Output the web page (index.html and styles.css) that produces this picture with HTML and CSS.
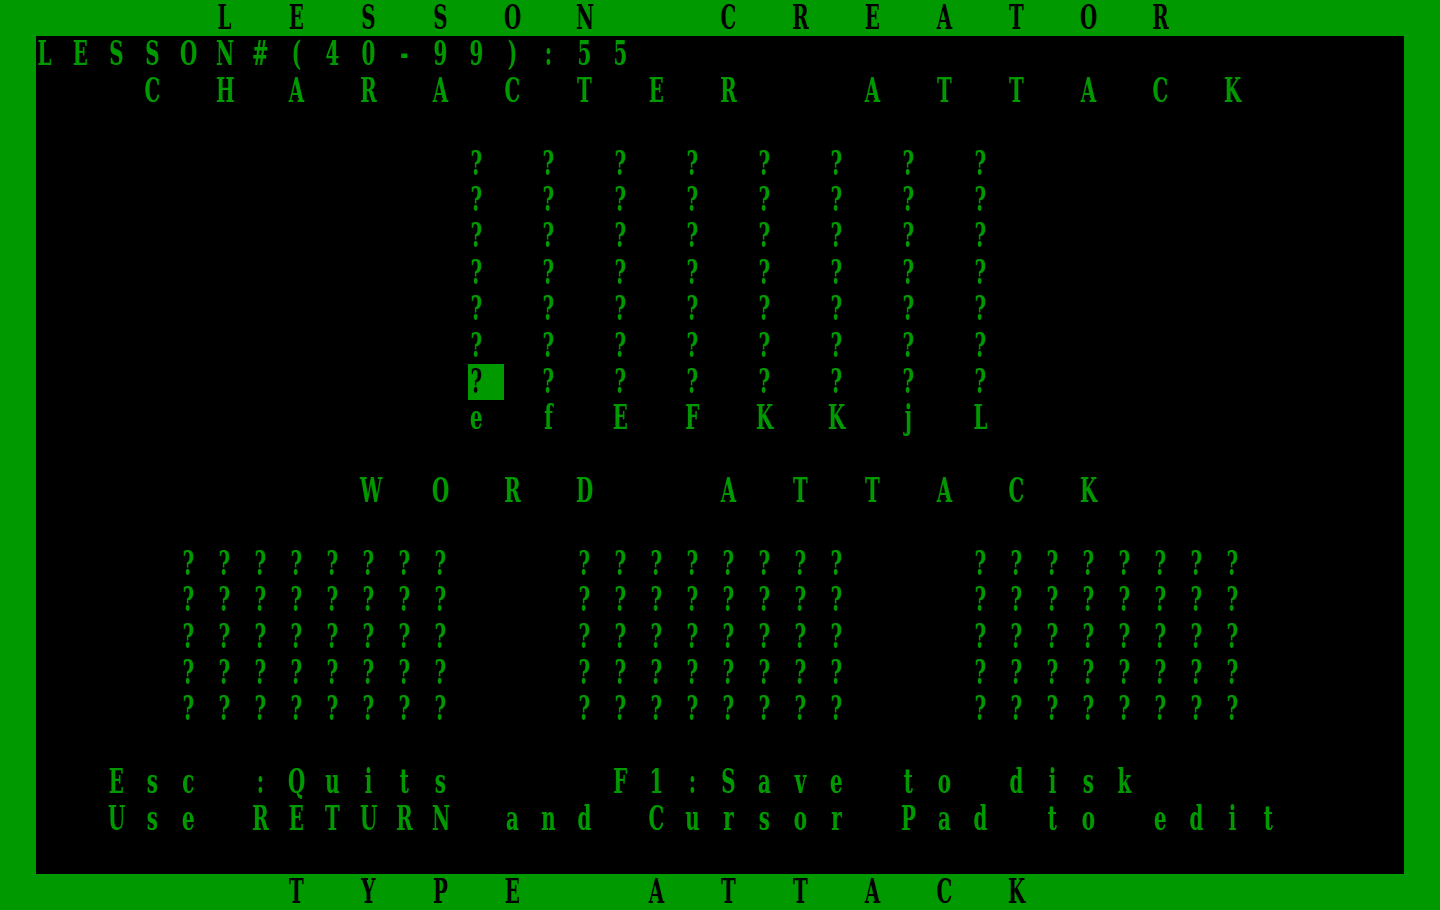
FILE: index.html
```html
<!DOCTYPE html>
<html>
<head>
<meta charset="utf-8">
<title>Lesson Creator</title>
<link rel="stylesheet" href="styles.css">
</head>
<body>
<div class="screen">
  <div class="bar">
    <div class="line w2"><b class="s6"></b><i>L</i><i>E</i><i>S</i><i>S</i><i>O</i><i>N</i><b class="s2"></b><i>C</i><i>R</i><i>E</i><i>A</i><i>T</i><i>O</i><i>R</i></div>
  </div>
  <div class="panel">
    <div class="line"><i>L</i><i>E</i><i>S</i><i>S</i><i>O</i><i>N</i><i>#</i><i>(</i><i>4</i><i>0</i><i>-</i><i>9</i><i>9</i><i>)</i><i>:</i><i>5</i><i>5</i></div>
    <div class="line w2"><b class="s3"></b><i>C</i><i>H</i><i>A</i><i>R</i><i>A</i><i>C</i><i>T</i><i>E</i><i>R</i><b class="s2"></b><i>A</i><i>T</i><i>T</i><i>A</i><i>C</i><i>K</i></div>
    <div class="line"></div>
    <div class="line w2"><b class="s12"></b><i>?</i><i>?</i><i>?</i><i>?</i><i>?</i><i>?</i><i>?</i><i>?</i></div>
    <div class="line w2"><b class="s12"></b><i>?</i><i>?</i><i>?</i><i>?</i><i>?</i><i>?</i><i>?</i><i>?</i></div>
    <div class="line w2"><b class="s12"></b><i>?</i><i>?</i><i>?</i><i>?</i><i>?</i><i>?</i><i>?</i><i>?</i></div>
    <div class="line w2"><b class="s12"></b><i>?</i><i>?</i><i>?</i><i>?</i><i>?</i><i>?</i><i>?</i><i>?</i></div>
    <div class="line w2"><b class="s12"></b><i>?</i><i>?</i><i>?</i><i>?</i><i>?</i><i>?</i><i>?</i><i>?</i></div>
    <div class="line w2"><b class="s12"></b><i>?</i><i>?</i><i>?</i><i>?</i><i>?</i><i>?</i><i>?</i><i>?</i></div>
    <div class="line w2"><b class="s12"></b><i class="cur">?</i><i>?</i><i>?</i><i>?</i><i>?</i><i>?</i><i>?</i><i>?</i></div>
    <div class="line w2"><b class="s12"></b><i>e</i><i>f</i><i>E</i><i>F</i><i>K</i><i>K</i><i>j</i><i>L</i></div>
    <div class="line"></div>
    <div class="line w2"><b class="s9"></b><i>W</i><i>O</i><i>R</i><i>D</i><b class="s2"></b><i>A</i><i>T</i><i>T</i><i>A</i><i>C</i><i>K</i></div>
    <div class="line"></div>
    <div class="line"><b class="s4"></b><i>?</i><i>?</i><i>?</i><i>?</i><i>?</i><i>?</i><i>?</i><i>?</i><b class="s3"></b><i>?</i><i>?</i><i>?</i><i>?</i><i>?</i><i>?</i><i>?</i><i>?</i><b class="s3"></b><i>?</i><i>?</i><i>?</i><i>?</i><i>?</i><i>?</i><i>?</i><i>?</i></div>
    <div class="line"><b class="s4"></b><i>?</i><i>?</i><i>?</i><i>?</i><i>?</i><i>?</i><i>?</i><i>?</i><b class="s3"></b><i>?</i><i>?</i><i>?</i><i>?</i><i>?</i><i>?</i><i>?</i><i>?</i><b class="s3"></b><i>?</i><i>?</i><i>?</i><i>?</i><i>?</i><i>?</i><i>?</i><i>?</i></div>
    <div class="line"><b class="s4"></b><i>?</i><i>?</i><i>?</i><i>?</i><i>?</i><i>?</i><i>?</i><i>?</i><b class="s3"></b><i>?</i><i>?</i><i>?</i><i>?</i><i>?</i><i>?</i><i>?</i><i>?</i><b class="s3"></b><i>?</i><i>?</i><i>?</i><i>?</i><i>?</i><i>?</i><i>?</i><i>?</i></div>
    <div class="line"><b class="s4"></b><i>?</i><i>?</i><i>?</i><i>?</i><i>?</i><i>?</i><i>?</i><i>?</i><b class="s3"></b><i>?</i><i>?</i><i>?</i><i>?</i><i>?</i><i>?</i><i>?</i><i>?</i><b class="s3"></b><i>?</i><i>?</i><i>?</i><i>?</i><i>?</i><i>?</i><i>?</i><i>?</i></div>
    <div class="line"><b class="s4"></b><i>?</i><i>?</i><i>?</i><i>?</i><i>?</i><i>?</i><i>?</i><i>?</i><b class="s3"></b><i>?</i><i>?</i><i>?</i><i>?</i><i>?</i><i>?</i><i>?</i><i>?</i><b class="s3"></b><i>?</i><i>?</i><i>?</i><i>?</i><i>?</i><i>?</i><i>?</i><i>?</i></div>
    <div class="line"></div>
    <div class="line"><b class="s2"></b><i>E</i><i>s</i><i>c</i><b class="s1"></b><i>:</i><i>Q</i><i>u</i><i>i</i><i>t</i><i>s</i><b class="s4"></b><i>F</i><i>1</i><i>:</i><i>S</i><i>a</i><i>v</i><i>e</i><b class="s1"></b><i>t</i><i>o</i><b class="s1"></b><i>d</i><i>i</i><i>s</i><i>k</i></div>
    <div class="line"><b class="s2"></b><i>U</i><i>s</i><i>e</i><b class="s1"></b><i>R</i><i>E</i><i>T</i><i>U</i><i>R</i><i>N</i><b class="s1"></b><i>a</i><i>n</i><i>d</i><b class="s1"></b><i>C</i><i>u</i><i>r</i><i>s</i><i>o</i><i>r</i><b class="s1"></b><i>P</i><i>a</i><i>d</i><b class="s1"></b><i>t</i><i>o</i><b class="s1"></b><i>e</i><i>d</i><i>i</i><i>t</i></div>
    <div class="line"></div>
  </div>
  <div class="bar">
    <div class="line w2"><b class="s8"></b><i>T</i><i>Y</i><i>P</i><i>E</i><b class="s2"></b><i>A</i><i>T</i><i>T</i><i>A</i><i>C</i><i>K</i></div>
  </div>
</div>
</body>
</html>
```
FILE: styles.css
```css
html, body {
  margin: 0;
  padding: 0;
  background: #009a00;
}

.screen {
  width: 1440px;
  height: 910px;
  background: #009a00;
  display: flex;
  flex-direction: column;
  overflow: hidden;
}

.bar {
  height: 36.4px;
  color: #000;
  flex: none;
}

.panel {
  flex: 1;
  margin: 0 36px;
  background: #000;
  color: #009a00;
}

/* one text row of the 40-column screen; cells are drawn 60px wide and squeezed to 36px */
.line {
  display: flex;
  height: 36.4px;
  line-height: 36.4px;
  font-family: "DejaVu Serif", "Liberation Serif", serif;
  font-weight: bold;
  font-size: 33px;
  white-space: pre;
  transform: scaleX(0.6);
  transform-origin: 0 0;
  width: 2400px;
}

.line i {
  flex: none;
  font-style: normal;
  width: 28px;
  padding-right: 32px;
  text-align: center;
}

.line.w2 i {
  padding-right: 92px;
}

.line.w2 i.cur {
  padding-right: 32px;
  margin-right: 60px;
}

.cur {
  background: #009a00;
  color: #000;
}

.line b {
  flex: none;
}

.s1 { width: 60px; }
.s2 { width: 120px; }
.s3 { width: 180px; }
.s4 { width: 240px; }
.s6 { width: 360px; }
.s8 { width: 480px; }
.s9 { width: 540px; }
.s12 { width: 720px; }
```
